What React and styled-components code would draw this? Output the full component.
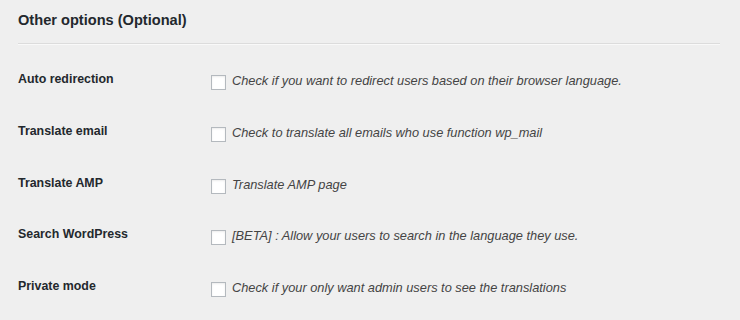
import React from "react";
import styled, { createGlobalStyle } from "styled-components";

const Global = createGlobalStyle`
  html, body { margin: 0; padding: 0; background: #efefef; }
  body { font-family: "Liberation Sans", Arial, sans-serif; color: #23282d; }
`;

const Page = styled.div`
  width: 740px;
  height: 320px;
  box-sizing: border-box;
  padding: 0 20px 0 18px;
  overflow: hidden;
`;

const Heading = styled.h2`
  margin: 0;
  padding-top: 11px;
  height: 43px;
  box-sizing: border-box;
  font-size: 14.6px;
  font-weight: 700;
  line-height: 18px;
  color: #23282d;
`;

const Divider = styled.hr`
  margin: 0;
  border: 0;
  border-top: 1px solid #dcdcdc;
  border-bottom: 1px solid #f9f9f9;
  height: 0;
`;

const Table = styled.div`
  display: flex;
  flex-direction: column;
  padding-top: 19px;
`;

const Row = styled.div`
  display: flex;
  align-items: flex-start;
  height: 51.8px;
`;

const Label = styled.div`
  width: 193px;
  flex: none;
  font-size: 12.4px;
  font-weight: 700;
  line-height: 18px;
  padding-top: 6px;
`;

const Field = styled.label`
  display: flex;
  align-items: flex-start;
  gap: 6px;
  padding-top: 8px;
`;

const Box = styled.span`
  width: 13px;
  height: 13px;
  flex: none;
  margin-top: 3px;
  background: #ffffff;
  border: 1px solid #b4b9be;
  box-shadow: inset 0 1px 2px rgba(0, 0, 0, 0.08);
`;

const Description = styled.span`
  font-size: 12.8px;
  font-style: italic;
  line-height: 18px;
  color: #444;
`;

const rows = [
  ["Auto redirection", "Check if you want to redirect users based on their browser language."],
  ["Translate email", "Check to translate all emails who use function wp_mail"],
  ["Translate AMP", "Translate AMP page"],
  ["Search WordPress", "[BETA] : Allow your users to search in the language they use."],
  ["Private mode", "Check if your only want admin users to see the translations"],
];

export default function App() {
  return (
    <Page>
      <Global />
      <Heading>Other options (Optional)</Heading>
      <Divider />
      <Table>
        {rows.map(([label, desc]) => (
          <Row key={label}>
            <Label>{label}</Label>
            <Field>
              <Box />
              <Description>{desc}</Description>
            </Field>
          </Row>
        ))}
      </Table>
    </Page>
  );
}
